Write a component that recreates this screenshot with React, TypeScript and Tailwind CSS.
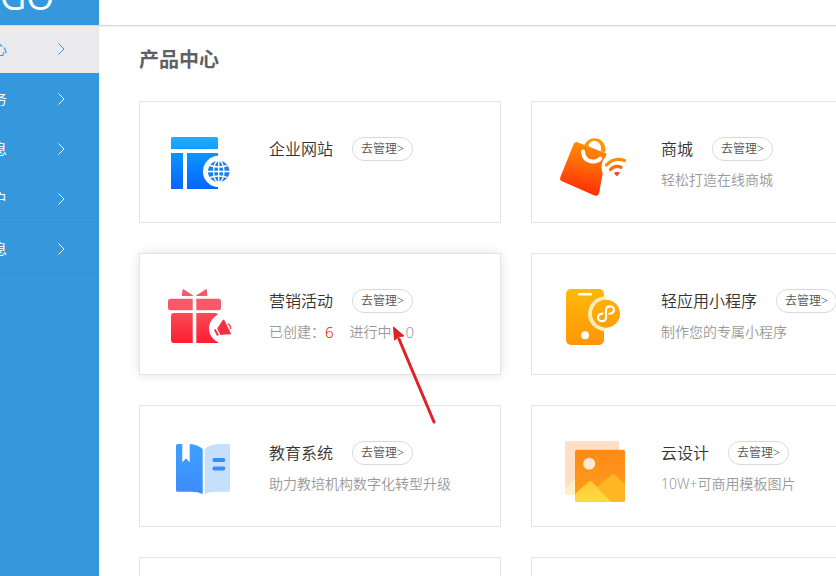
import type { ReactNode } from "react";
import clsx from "clsx";

function SiteIcon() {
  return (
    <svg viewBox="0 0 80 70" className="h-[70px] w-20 shrink-0 overflow-visible" aria-hidden="true">
      <defs>
        <linearGradient id="siteTop" x1="0" y1="0" x2="0" y2="1">
          <stop offset="0" stopColor="#22adff" />
          <stop offset="1" stopColor="#139dff" />
        </linearGradient>
        <linearGradient id="siteBody" gradientUnits="userSpaceOnUse" x1="0" y1="26" x2="0" y2="62">
          <stop offset="0" stopColor="#0a95ff" />
          <stop offset="1" stopColor="#0765ff" />
        </linearGradient>
      </defs>
      <path d="M13.500 10h44a1.500 1.500 0 0 1 1.500 1.500v10.500H12V11.500a1.500 1.500 0 0 1 1.500-1.500z" fill="url(#siteTop)" />
      <path d="M12 26h12v36H12zM28 26h31v36H28z" fill="url(#siteBody)" />
      <circle cx="59.700" cy="44.500" r="15.700" fill="#fff" />
      <circle cx="59.700" cy="44.500" r="10.700" fill="#1583e8" />
      <g fill="none" stroke="#fff" strokeWidth="1.400">
        <path d="M59.700 33.500v22M49 44.500h21.500" />
        <path d="M51 38.500q8.700 3 17.400 0M51 50.500q8.700-3 17.400 0" />
        <ellipse cx="59.700" cy="44.500" rx="5.200" ry="11" />
      </g>
    </svg>
  );
}

function MallIcon() {
  return (
    <svg viewBox="0 0 80 70" className="h-[70px] w-20 shrink-0 overflow-visible" aria-hidden="true">
      <defs>
        <linearGradient id="mall" gradientUnits="userSpaceOnUse" x1="42" y1="10" x2="32" y2="68">
          <stop offset="0" stopColor="#ff9a00" />
          <stop offset="0.45" stopColor="#ff6d08" />
          <stop offset="1" stopColor="#ff2a08" />
        </linearGradient>
      </defs>
      <path d="M26.500 15.200 55.500 26.500 48 66.500q-1.200 3.300-4.500 2L10.500 54q-2-1.200-1.300-3.500L22.500 17.500q1.200-3 4-2.300z" fill="url(#mall)" />
      <path d="M35 20a8.700 8.700 0 1 1 17 5" fill="none" stroke="#ff9500" strokeWidth="4.500" />
      <path d="M37.200 18.200a6.300 6.300 0 0 1 12.300 4.200z" fill="#fff" />
      <path d="M32 24.500c.5 6.500 4 9.500 9 10 4 .4 6.500-.8 8.300-3" fill="none" stroke="#fff" strokeWidth="4" strokeLinecap="round" />
      <circle cx="65" cy="40" r="14.500" fill="#fff" />
      <g fill="none" strokeLinecap="round">
        <path d="M55.500 38q7.500-8 18-4.500" stroke="#ff8a0c" strokeWidth="3.200" />
        <path d="M59.500 42.500q4.500-5 10.500-2.200" stroke="#ff6b15" strokeWidth="3.200" />
      </g>
      <path d="M63.500 46.200q2.500-1.600 4.800-.4l-2.200 3z" fill="#f9401d" stroke="#f9401d" strokeLinejoin="round" />
    </svg>
  );
}

function GiftIcon() {
  return (
    <svg viewBox="0 0 80 70" className="h-[70px] w-20 shrink-0 overflow-visible" aria-hidden="true">
      <defs>
        <linearGradient id="gift" gradientUnits="userSpaceOnUse" x1="0" y1="34" x2="0" y2="64">
          <stop offset="0" stopColor="#fb4b58" />
          <stop offset="1" stopColor="#fb1e31" />
        </linearGradient>
      </defs>
      <g fill="#f9576a">
        <path d="m24.500 10.300 9.700 6.200-.5.500H23.200q-.8-.4-.2-1.800l.5-4.200q.3-.9 1-.7zM47 10.300l-10 6.200.5.500h10.200q1-.4.500-1.800l-.3-4.200q-.2-.9-.9-.7z" />
        <path d="M11.500 19.700h22.200v11.500H11.500A2.500 2.500 0 0 1 9 28.700v-6.500a2.500 2.500 0 0 1 2.500-2.500zM37.300 19.700h22.200a2.500 2.500 0 0 1 2.500 2.500v6.500a2.500 2.500 0 0 1-2.500 2.500H37.300z" />
      </g>
      <path d="M15 34h18.700v30H15a3 3 0 0 1-3-3V37a3 3 0 0 1 3-3zM37.300 34H56a3 3 0 0 1 3 3v27H37.300z" fill="url(#gift)" />
      <circle cx="65" cy="49.500" r="15" fill="#fff" />
      <path d="M63.800 41q.8-1.200 1.500 0l7 14.300q-5.500-.2-10.800.7l-3.300-6.500z" fill="#f22f43" />
      <path d="m55.800 50.500 3.200 6" stroke="#f22f43" strokeWidth="2" />
      <path d="M68.700 45q3 .8 3 5" fill="none" stroke="#f44b5c" strokeWidth="1.500" />
    </svg>
  );
}

function MiniAppIcon() {
  return (
    <svg viewBox="0 0 80 70" className="h-[70px] w-20 shrink-0 overflow-visible" aria-hidden="true">
      <defs>
        <linearGradient id="phone" gradientUnits="userSpaceOnUse" x1="30" y1="10" x2="38" y2="66">
          <stop offset="0" stopColor="#ffb80a" />
          <stop offset="1" stopColor="#ff9606" />
        </linearGradient>
      </defs>
      <rect x="15" y="10" width="38" height="56" rx="5" fill="url(#phone)" />
      <rect x="27" y="14" width="14" height="2.500" rx="1" fill="#fff" />
      <circle cx="34" cy="56.300" r="4" fill="#fff" />
      <path d="M53 17.500a17.300 17.300 0 0 0 0 34.500l2-3V20z" fill="#ffedb5" />
      <circle cx="55" cy="34.700" r="14" fill="url(#phone)" />
      <path d="M51.500 34.700c-2.800.3-4.500 2-4.500 4a3.700 3.700 0 0 0 4 3.500c2.400 0 4-1.600 4-4V31.500c0-2.500 1.600-4.200 4-4.200a3.700 3.700 0 0 1 4 3.500c0 2-1.700 3.700-4.500 4" fill="none" stroke="#fff" strokeWidth="2.200" strokeLinecap="round" />
    </svg>
  );
}

function BookIcon() {
  return (
    <svg viewBox="0 0 80 70" className="h-[70px] w-20 shrink-0 overflow-visible" aria-hidden="true">
      <defs>
        <linearGradient id="book" x1="0" y1="0" x2="0" y2="1">
          <stop offset="0" stopColor="#3ea0fc" />
          <stop offset="1" stopColor="#3d8bff" />
        </linearGradient>
      </defs>
      <path d="M18.500 13h4.800v18.200l3.700-3.700 3.700 3.700V13q8 .3 13 5v45q-5-2.300-11-2.300H18.500q-1.500 0-1.500-1.500V14.500q0-1.500 1.500-1.500z" fill="url(#book)" />
      <path d="M45.700 18q5-4.700 14-5h9.800q1.500 0 1.500 1.500v44.700q0 1.500-1.500 1.500H58q-7 0-12.300 2.300z" fill="#c5dffd" />
      <rect x="53.500" y="27" width="12.700" height="4" rx="1.700" fill="#3b8bf5" />
      <rect x="53.500" y="35.500" width="12.700" height="4" rx="1.700" fill="#3b8bf5" />
    </svg>
  );
}

function DesignIcon() {
  return (
    <svg viewBox="0 0 80 70" className="h-[70px] w-20 shrink-0 overflow-visible" aria-hidden="true">
      <defs>
        <linearGradient id="photo" x1="0" y1="0" x2="0" y2="1">
          <stop offset="0" stopColor="#ff8918" />
          <stop offset="1" stopColor="#ffa01c" />
        </linearGradient>
        <linearGradient id="hill" x1="0" y1="0" x2="0" y2="1">
          <stop offset="0" stopColor="#ffc933" />
          <stop offset="1" stopColor="#ffdb45" />
        </linearGradient>
      </defs>
      <rect x="14" y="10" width="54" height="54" rx="1.500" fill="#ffdfc5" />
      <path d="M14 57l10-8v15H15.500a1.500 1.500 0 0 1-1.500-1.500z" fill="#fff0c8" />
      <rect x="24" y="18.700" width="50" height="52" rx="2" fill="url(#photo)" />
      <circle cx="38.200" cy="32.700" r="6" fill="#ffe9d2" />
      <path d="M45 57 60.500 43.800q1.800-1.500 3.500 0L74 53.500v15.200a2 2 0 0 1-2 2H50z" fill="#ffb624" />
      <path d="M24 63 37.500 50.800q1.700-1.500 3.500 0L60 70.700H26a2 2 0 0 1-2-2z" fill="url(#hill)" />
    </svg>
  );
}

type Product = {
  name: string;
  icon: ReactNode;
  desc?: ReactNode;
  active?: boolean;
};

const products: Product[] = [
  { name: "企业网站", icon: <SiteIcon /> },
  { name: "商城", icon: <MallIcon />, desc: "轻松打造在线商城" },
  {
    name: "营销活动",
    icon: <GiftIcon />,
    active: true,
    desc: (
      <span className="flex items-center">
        已创建：<span className="text-[15px] leading-5 text-[#f00]">6</span>
        <span className="ml-4">进行中：</span>
        <span className="text-[15px] leading-5">0</span>
      </span>
    ),
  },
  { name: "轻应用小程序", icon: <MiniAppIcon />, desc: "制作您的专属小程序" },
  { name: "教育系统", icon: <BookIcon />, desc: "助力教培机构数字化转型升级" },
  { name: "云设计", icon: <DesignIcon />, desc: "10W+可商用模板图片" },
];

const menus = ["心", "务", "息", "户", "息"];

function ProductCard({ name, icon, desc, active }: Product) {
  return (
    <div
      className={clsx(
        "flex items-start gap-[30px] border border-[#e4e4e6] bg-white py-[25px] pl-[19px]",
        active && "shadow-[0_0_10px_rgba(0,0,0,0.12)]"
      )}
    >
      {icon}
      <div className="pt-2.5 whitespace-nowrap">
        <div className="flex items-center gap-[19px]">
          <h2 className="text-base leading-[22px] text-[#333]">{name}</h2>
          <button type="button" className="h-6 rounded-full border border-[#d9d9dc] px-2 text-xs text-[#555]">
            去管理&gt;
          </button>
        </div>
        {desc && <div className="mt-[9px] text-sm leading-5 text-[#999]">{desc}</div>}
      </div>
    </div>
  );
}

function Sidebar() {
  return (
    <nav className="w-[99px] shrink-0 bg-[#3598dc]">
      {menus.map((label, i) => (
        <a
          key={i}
          href="#"
          className={clsx(
            "flex items-center justify-between pr-[34px]",
            i === 0 ? "h-[47px] bg-[#ebebed] pb-0.5 text-[#3598dc]" : "h-[50px] border-b border-[#3294da] pt-0.5 text-white"
          )}
        >
          <span className="flex w-[7px] justify-end overflow-hidden text-sm font-normal">{label}</span>
          <svg viewBox="0 0 8 12" className="h-3 w-2" fill="none" stroke="currentColor" aria-hidden="true">
            <path d="M1.500.5 7 6l-5.500 5.500" />
          </svg>
        </a>
      ))}
    </nav>
  );
}

function App() {
  return (
    <div className="relative flex h-screen flex-col overflow-hidden bg-white font-['Noto_Sans','Noto_Sans_CJK_SC',sans-serif] font-[350]">
      <header className="flex h-[26px] shrink-0 border-b border-[#d8dade] shadow-[0_1px_1px_rgba(0,0,0,0.06)]">
        <div className="flex w-[99px] items-end overflow-hidden bg-[#3598dc] font-['Open_Sans',sans-serif]">
          <span className="text-[36px] leading-[56px] font-normal text-white">GO</span>
        </div>
      </header>

      <div className="flex min-h-0 flex-1">
        <Sidebar />
        <main className="min-w-0 flex-1 overflow-hidden pt-5 pl-10">
          <h1 className="mb-[27px] text-xl leading-7 font-bold text-[#5f5f66]">产品中心</h1>
          <div className="grid grid-cols-[repeat(2,362px)] gap-[30px]">
            {products.map((item) => (
              <ProductCard key={item.name} {...item} />
            ))}
            <div className="h-[122px] border border-[#e4e4e6]" />
            <div className="h-[122px] border border-[#e4e4e6]" />
          </div>
        </main>
      </div>

      <svg viewBox="0 0 48 100" className="pointer-events-none absolute top-[325px] left-[390px] h-[100px] w-12" aria-hidden="true">
        <path d="M44 97 9 14" stroke="#dd2327" strokeWidth="3" strokeLinecap="round" />
        <path d="M3.500 2 14 11 9.500 11.500 4.500 15z" fill="#dd2327" stroke="#dd2327" />
      </svg>
    </div>
  );
}

export default App;
